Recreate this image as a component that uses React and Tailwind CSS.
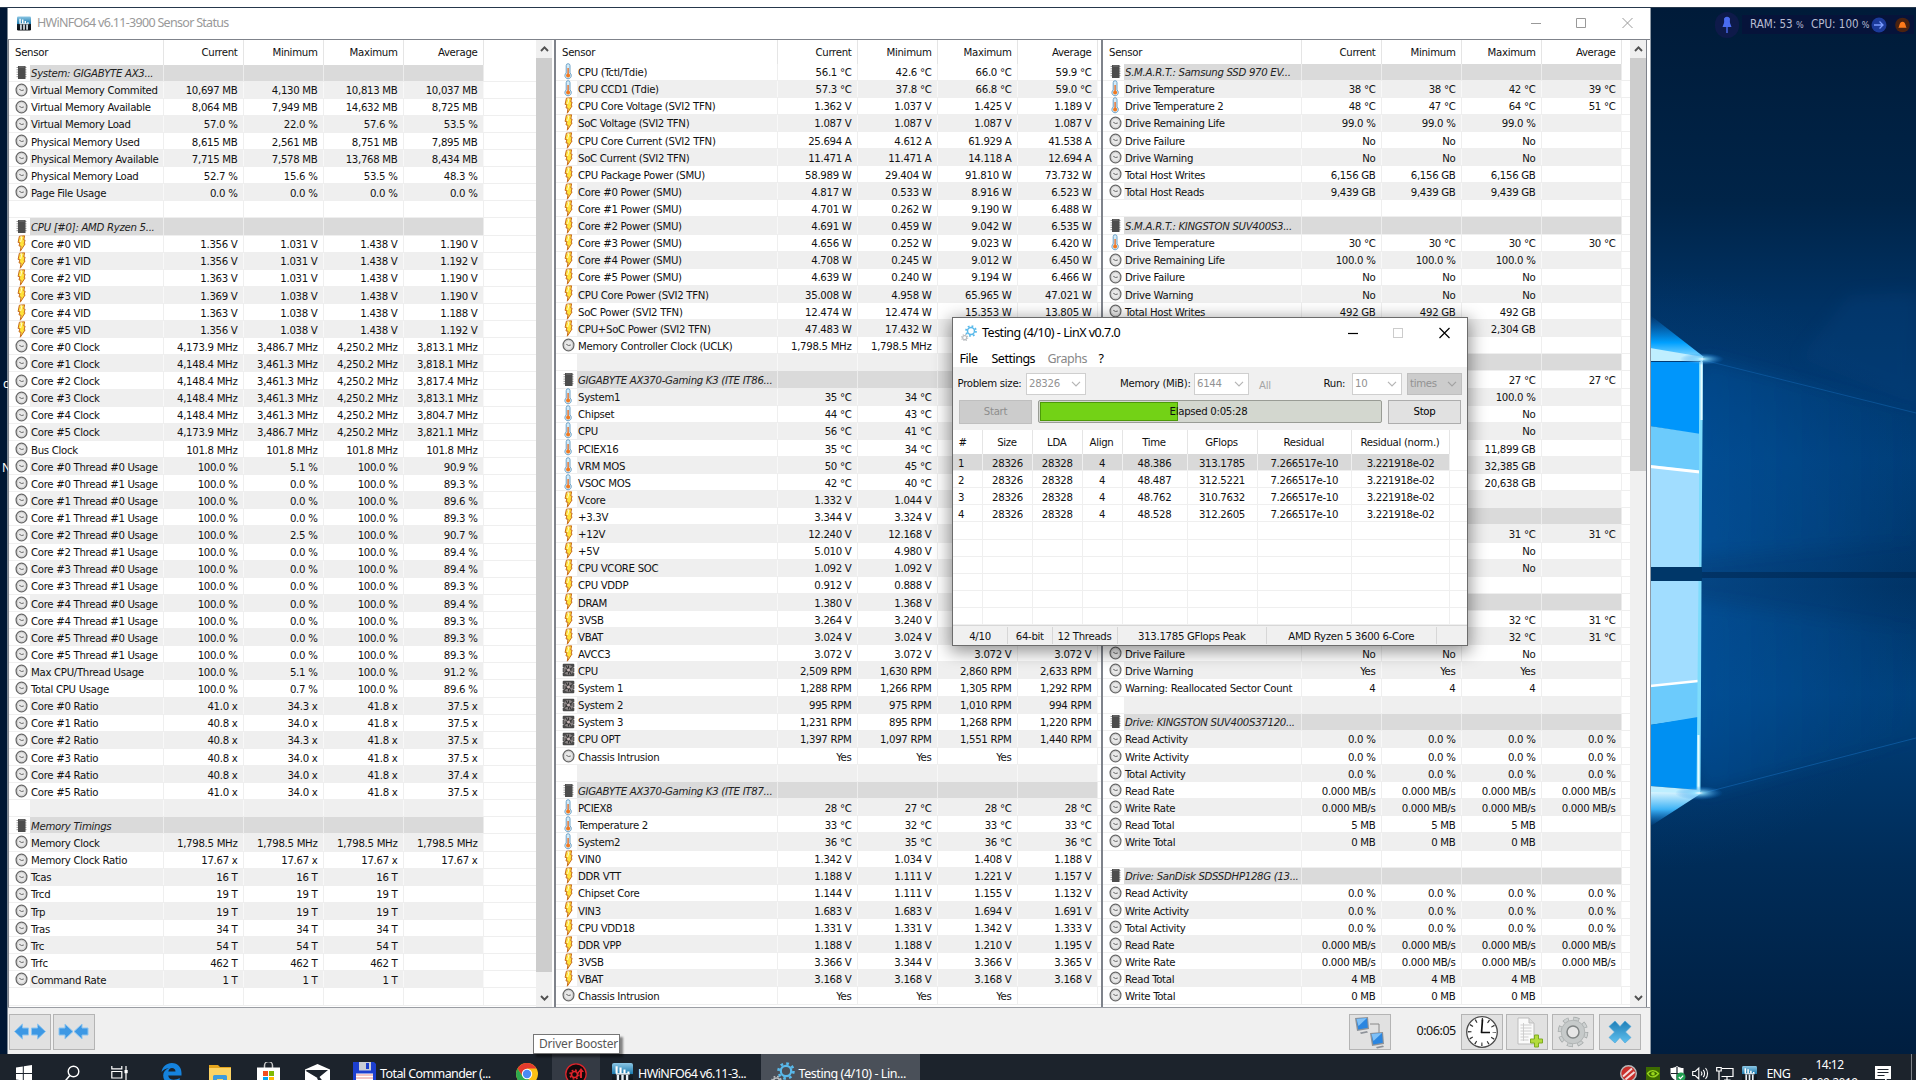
import React from "react";

/* ---------- sensor data: [icon, label, current, minimum, maximum, average] ---------- */
const usage = (name, min, avg) => ["c", name, "100.0 %", min, "100.0 %", avg];

const pane1 = [
  ["s", "System: GIGABYTE AX3..."],
  ["c", "Virtual Memory Commited", "10,697 MB", "4,130 MB", "10,813 MB", "10,037 MB"],
  ["c", "Virtual Memory Available", "8,064 MB", "7,949 MB", "14,632 MB", "8,725 MB"],
  ["c", "Virtual Memory Load", "57.0 %", "22.0 %", "57.6 %", "53.5 %"],
  ["c", "Physical Memory Used", "8,615 MB", "2,561 MB", "8,751 MB", "7,895 MB"],
  ["c", "Physical Memory Available", "7,715 MB", "7,578 MB", "13,768 MB", "8,434 MB"],
  ["c", "Physical Memory Load", "52.7 %", "15.6 %", "53.5 %", "48.3 %"],
  ["c", "Page File Usage", "0.0 %", "0.0 %", "0.0 %", "0.0 %"],
  [],
  ["s", "CPU [#0]: AMD Ryzen 5..."],
  ["v", "Core #0 VID", "1.356 V", "1.031 V", "1.438 V", "1.190 V"],
  ["v", "Core #1 VID", "1.356 V", "1.031 V", "1.438 V", "1.192 V"],
  ["v", "Core #2 VID", "1.363 V", "1.031 V", "1.438 V", "1.190 V"],
  ["v", "Core #3 VID", "1.369 V", "1.038 V", "1.438 V", "1.190 V"],
  ["v", "Core #4 VID", "1.363 V", "1.038 V", "1.438 V", "1.188 V"],
  ["v", "Core #5 VID", "1.356 V", "1.038 V", "1.438 V", "1.192 V"],
  ["c", "Core #0 Clock", "4,173.9 MHz", "3,486.7 MHz", "4,250.2 MHz", "3,813.1 MHz"],
  ["c", "Core #1 Clock", "4,148.4 MHz", "3,461.3 MHz", "4,250.2 MHz", "3,818.1 MHz"],
  ["c", "Core #2 Clock", "4,148.4 MHz", "3,461.3 MHz", "4,250.2 MHz", "3,817.4 MHz"],
  ["c", "Core #3 Clock", "4,148.4 MHz", "3,461.3 MHz", "4,250.2 MHz", "3,813.1 MHz"],
  ["c", "Core #4 Clock", "4,148.4 MHz", "3,461.3 MHz", "4,250.2 MHz", "3,804.7 MHz"],
  ["c", "Core #5 Clock", "4,173.9 MHz", "3,486.7 MHz", "4,250.2 MHz", "3,821.1 MHz"],
  ["c", "Bus Clock", "101.8 MHz", "101.8 MHz", "101.8 MHz", "101.8 MHz"],
  usage("Core #0 Thread #0 Usage", "5.1 %", "90.9 %"),
  usage("Core #0 Thread #1 Usage", "0.0 %", "89.3 %"),
  usage("Core #1 Thread #0 Usage", "0.0 %", "89.6 %"),
  usage("Core #1 Thread #1 Usage", "0.0 %", "89.3 %"),
  usage("Core #2 Thread #0 Usage", "2.5 %", "90.7 %"),
  usage("Core #2 Thread #1 Usage", "0.0 %", "89.4 %"),
  usage("Core #3 Thread #0 Usage", "0.0 %", "89.4 %"),
  usage("Core #3 Thread #1 Usage", "0.0 %", "89.3 %"),
  usage("Core #4 Thread #0 Usage", "0.0 %", "89.4 %"),
  usage("Core #4 Thread #1 Usage", "0.0 %", "89.3 %"),
  usage("Core #5 Thread #0 Usage", "0.0 %", "89.3 %"),
  usage("Core #5 Thread #1 Usage", "0.0 %", "89.3 %"),
  usage("Max CPU/Thread Usage", "5.1 %", "91.2 %"),
  usage("Total CPU Usage", "0.7 %", "89.6 %"),
  ["c", "Core #0 Ratio", "41.0 x", "34.3 x", "41.8 x", "37.5 x"],
  ["c", "Core #1 Ratio", "40.8 x", "34.0 x", "41.8 x", "37.5 x"],
  ["c", "Core #2 Ratio", "40.8 x", "34.3 x", "41.8 x", "37.5 x"],
  ["c", "Core #3 Ratio", "40.8 x", "34.0 x", "41.8 x", "37.5 x"],
  ["c", "Core #4 Ratio", "40.8 x", "34.0 x", "41.8 x", "37.4 x"],
  ["c", "Core #5 Ratio", "41.0 x", "34.0 x", "41.8 x", "37.5 x"],
  [],
  ["s", "Memory Timings"],
  ["c", "Memory Clock", "1,798.5 MHz", "1,798.5 MHz", "1,798.5 MHz", "1,798.5 MHz"],
  ["c", "Memory Clock Ratio", "17.67 x", "17.67 x", "17.67 x", "17.67 x"],
  ["c", "Tcas", "16 T", "16 T", "16 T", ""],
  ["c", "Trcd", "19 T", "19 T", "19 T", ""],
  ["c", "Trp", "19 T", "19 T", "19 T", ""],
  ["c", "Tras", "34 T", "34 T", "34 T", ""],
  ["c", "Trc", "54 T", "54 T", "54 T", ""],
  ["c", "Trfc", "462 T", "462 T", "462 T", ""],
  ["c", "Command Rate", "1 T", "1 T", "1 T", ""],
  [],
];

const pane2 = [
  ["t", "CPU (Tctl/Tdie)", "56.1 °C", "42.6 °C", "66.0 °C", "59.9 °C"],
  ["t", "CPU CCD1 (Tdie)", "57.3 °C", "37.8 °C", "66.8 °C", "59.0 °C"],
  ["v", "CPU Core Voltage (SVI2 TFN)", "1.362 V", "1.037 V", "1.425 V", "1.189 V"],
  ["v", "SoC Voltage (SVI2 TFN)", "1.087 V", "1.087 V", "1.087 V", "1.087 V"],
  ["v", "CPU Core Current (SVI2 TFN)", "25.694 A", "4.612 A", "61.929 A", "41.538 A"],
  ["v", "SoC Current (SVI2 TFN)", "11.471 A", "11.471 A", "14.118 A", "12.694 A"],
  ["v", "CPU Package Power (SMU)", "58.989 W", "29.404 W", "91.810 W", "73.732 W"],
  ["v", "Core #0 Power (SMU)", "4.817 W", "0.533 W", "8.916 W", "6.523 W"],
  ["v", "Core #1 Power (SMU)", "4.701 W", "0.262 W", "9.190 W", "6.488 W"],
  ["v", "Core #2 Power (SMU)", "4.691 W", "0.459 W", "9.042 W", "6.535 W"],
  ["v", "Core #3 Power (SMU)", "4.656 W", "0.252 W", "9.023 W", "6.420 W"],
  ["v", "Core #4 Power (SMU)", "4.708 W", "0.245 W", "9.012 W", "6.450 W"],
  ["v", "Core #5 Power (SMU)", "4.639 W", "0.240 W", "9.194 W", "6.466 W"],
  ["v", "CPU Core Power (SVI2 TFN)", "35.008 W", "4.958 W", "65.965 W", "47.021 W"],
  ["v", "SoC Power (SVI2 TFN)", "12.474 W", "12.474 W", "15.353 W", "13.805 W"],
  ["v", "CPU+SoC Power (SVI2 TFN)", "47.483 W", "17.432 W"],
  ["c", "Memory Controller Clock (UCLK)", "1,798.5 MHz", "1,798.5 MHz"],
  [],
  ["s", "GIGABYTE AX370-Gaming K3 (ITE IT86..."],
  ["t", "System1", "35 °C", "34 °C"],
  ["t", "Chipset", "44 °C", "43 °C"],
  ["t", "CPU", "56 °C", "41 °C"],
  ["t", "PCIEX16", "35 °C", "34 °C"],
  ["t", "VRM MOS", "50 °C", "45 °C"],
  ["t", "VSOC MOS", "42 °C", "40 °C"],
  ["v", "Vcore", "1.332 V", "1.044 V"],
  ["v", "+3.3V", "3.344 V", "3.324 V"],
  ["v", "+12V", "12.240 V", "12.168 V"],
  ["v", "+5V", "5.010 V", "4.980 V"],
  ["v", "CPU VCORE SOC", "1.092 V", "1.092 V"],
  ["v", "CPU VDDP", "0.912 V", "0.888 V"],
  ["v", "DRAM", "1.380 V", "1.368 V"],
  ["v", "3VSB", "3.264 V", "3.240 V"],
  ["v", "VBAT", "3.024 V", "3.024 V"],
  ["v", "AVCC3", "3.072 V", "3.072 V", "3.072 V", "3.072 V"],
  ["f", "CPU", "2,509 RPM", "1,630 RPM", "2,860 RPM", "2,633 RPM"],
  ["f", "System 1", "1,288 RPM", "1,266 RPM", "1,305 RPM", "1,292 RPM"],
  ["f", "System 2", "995 RPM", "975 RPM", "1,010 RPM", "994 RPM"],
  ["f", "System 3", "1,231 RPM", "895 RPM", "1,268 RPM", "1,220 RPM"],
  ["f", "CPU OPT", "1,397 RPM", "1,097 RPM", "1,551 RPM", "1,440 RPM"],
  ["c", "Chassis Intrusion", "Yes", "Yes", "Yes", ""],
  [],
  ["s", "GIGABYTE AX370-Gaming K3 (ITE IT87..."],
  ["t", "PCIEX8", "28 °C", "27 °C", "28 °C", "28 °C"],
  ["t", "Temperature 2", "33 °C", "32 °C", "33 °C", "33 °C"],
  ["t", "System2", "36 °C", "35 °C", "36 °C", "36 °C"],
  ["v", "VIN0", "1.342 V", "1.034 V", "1.408 V", "1.188 V"],
  ["v", "DDR VTT", "1.188 V", "1.111 V", "1.221 V", "1.157 V"],
  ["v", "Chipset Core", "1.144 V", "1.111 V", "1.155 V", "1.132 V"],
  ["v", "VIN3", "1.683 V", "1.683 V", "1.694 V", "1.691 V"],
  ["v", "CPU VDD18", "1.331 V", "1.331 V", "1.342 V", "1.333 V"],
  ["v", "DDR VPP", "1.188 V", "1.188 V", "1.210 V", "1.195 V"],
  ["v", "3VSB", "3.366 V", "3.344 V", "3.366 V", "3.365 V"],
  ["v", "VBAT", "3.168 V", "3.168 V", "3.168 V", "3.168 V"],
  ["c", "Chassis Intrusion", "Yes", "Yes", "Yes", ""],
];

const activity = (read, readTotal) => [
  ["c", "Read Activity", "0.0 %", "0.0 %", "0.0 %", "0.0 %"],
  ["c", "Write Activity", "0.0 %", "0.0 %", "0.0 %", "0.0 %"],
  ["c", "Total Activity", "0.0 %", "0.0 %", "0.0 %", "0.0 %"],
  ["c", "Read Rate", read, read, read, read],
  ["c", "Write Rate", read, read, read, read],
  ["c", "Read Total", readTotal, readTotal, readTotal, ""],
  ["c", "Write Total", "0 MB", "0 MB", "0 MB", ""],
];

const pane3 = [
  ["s", "S.M.A.R.T.: Samsung SSD 970 EV..."],
  ["t", "Drive Temperature", "38 °C", "38 °C", "42 °C", "39 °C"],
  ["t", "Drive Temperature 2", "48 °C", "47 °C", "64 °C", "51 °C"],
  ["c", "Drive Remaining Life", "99.0 %", "99.0 %", "99.0 %", ""],
  ["c", "Drive Failure", "No", "No", "No", ""],
  ["c", "Drive Warning", "No", "No", "No", ""],
  ["c", "Total Host Writes", "6,156 GB", "6,156 GB", "6,156 GB", ""],
  ["c", "Total Host Reads", "9,439 GB", "9,439 GB", "9,439 GB", ""],
  [],
  ["s", "S.M.A.R.T.: KINGSTON SUV400S3..."],
  ["t", "Drive Temperature", "30 °C", "30 °C", "30 °C", "30 °C"],
  ["c", "Drive Remaining Life", "100.0 %", "100.0 %", "100.0 %", ""],
  ["c", "Drive Failure", "No", "No", "No", ""],
  ["c", "Drive Warning", "No", "No", "No", ""],
  ["c", "Total Host Writes", "492 GB", "492 GB", "492 GB", ""],
  ["c", "", "", "", "2,304 GB", ""],
  [],
  ["s", ""],
  ["t", "", "", "", "27 °C", "27 °C"],
  ["c", "", "", "", "100.0 %", ""],
  ["c", "", "", "", "No", ""],
  ["c", "", "", "", "No", ""],
  ["c", "", "", "", "11,899 GB", ""],
  ["c", "", "", "", "32,385 GB", ""],
  ["c", "", "", "", "20,638 GB", ""],
  [],
  ["s", ""],
  ["t", "", "", "", "31 °C", "31 °C"],
  ["c", "", "", "", "No", ""],
  ["c", "", "", "", "No", ""],
  [],
  ["s", ""],
  ["t", "", "", "", "32 °C", "31 °C"],
  ["t", "", "", "", "32 °C", "31 °C"],
  ["c", "Drive Failure", "No", "No", "No", ""],
  ["c", "Drive Warning", "Yes", "Yes", "Yes", ""],
  ["c", "Warning: Reallocated Sector Count", "4", "4", "4", ""],
  [],
  ["s", "Drive: KINGSTON SUV400S37120..."],
  ...activity("0.000 MB/s", "5 MB"),
  [],
  ["s", "Drive: SanDisk SDSSDHP128G (13..."],
  ...activity("0.000 MB/s", "4 MB"),
];

/* ---------- row icons ---------- */
function RowIcon({ kind }) {
  if (kind === "c")
    return (
      <svg className="block h-[14px] w-[13px]" viewBox="0 0 13 14">
        <ellipse cx="6.5" cy="7" rx="5.4" ry="5.9" fill="#e9e9e9" stroke="#6a6a6a" strokeWidth="1.3" />
        <ellipse cx="6.5" cy="7" rx="4.2" ry="4.6" fill="none" stroke="#c4c4c4" strokeWidth=".8" />
        <path d="M4.300 6.300 6.600 7.500 8.800 7" fill="none" stroke="#666" strokeWidth="1" />
      </svg>
    );
  if (kind === "v")
    return (
      <svg className="block h-[17px] w-[13px]" viewBox="0 0 13 17">
        <path d="M4.4 1.2 9.6.8 8.8 5l1.3.2-1 3.4 1 .3-4.8 7.3L6 11.2l-2-.3.9-3.2-1.8-.3Z" fill="#ffe23a" stroke="#c76a1e" strokeWidth="1" />
        <path d="M5.2 2 7 1.8 5.6 7" stroke="#fffbd0" strokeWidth="1" fill="none" />
      </svg>
    );
  if (kind === "t")
    return (
      <svg className="block h-[17px] w-[13px]" viewBox="0 0 13 17">
        <path d="M4.2 2.6a1.9 1.9 0 0 1 3.8 0V10a3.2 3.2 0 1 1-3.8 0Z" fill="#d4ebf8" stroke="#6fa3c8" strokeWidth="1" />
        <path d="M6.1 5v7" stroke="#e8702a" strokeWidth="1.4" />
        <circle cx="6.1" cy="12.4" r="2" fill="#f07a22" />
      </svg>
    );
  if (kind === "f")
    return (
      <svg className="block h-[14px] w-[13px]" viewBox="0 0 13 14">
        <rect x=".7" y=".7" width="11.6" height="12.6" rx="1" fill="#4a4a4a" />
        <circle cx="6.5" cy="7" r="4.9" fill="#8b8585" />
        <path d="M6.5 7 4 3M6.5 7l4-2.5M6.5 7 9 11M6.5 7l-4 2.5M6.5 7V2.5M6.5 7h-4M6.5 7h4M6.5 7v4.500" stroke="#343434" strokeWidth="1.1" />
        <circle cx="6.5" cy="7" r="1.5" fill="#c9b9b9" />
        <path d="M0 4.500h1.500M0 9.500h1.500M11.500 4.500H13M11.500 9.500H13" stroke="#fff" strokeWidth=".8" />
      </svg>
    );
  if (kind === "s")
    return (
      <svg className="block h-[15px] w-[13px]" viewBox="0 0 13 15">
        <path d="M1.500 2.500h10M1.500 4.800h10M1.500 7.100h10M1.500 9.400h10M1.500 11.700h10" stroke="#9a9a9a" strokeWidth="1" />
        <rect x="3" y="1" width="7.500" height="13" fill="#4d4d4d" />
        <path d="M4 2h5.500" stroke="#777" />
      </svg>
    );
  return null;
}

function Row({ row, index, nameW, lastW }) {
  const section = row[0] === "s";
  const gray = index % 2 === 1;
  const bg = section ? "bg-[#dadada]" : gray ? "bg-[#efefef]" : "bg-white";
  const line = section ? "border-[#ececec]" : gray ? "border-[#f8f8f8]" : "border-[#efefef]";
  return (
    <div className="flex h-[17.118px] w-full shrink-0 items-stretch border-b border-[#efefef]">
      <div className={"flex shrink-0 " + nameW}>
        <div className="flex w-[21px] shrink-0 items-center justify-center bg-white pl-[4px]">
          <RowIcon kind={row[0]} />
        </div>
        <div className={"flex min-w-0 flex-1 items-center border-r pt-[2.500px] pl-[1px] whitespace-nowrap " + bg + " " + line + (section ? " text-[#222] italic" : "")}>
          {row[1]}
        </div>
      </div>
      {[2, 3, 4, 5].map((i) => (
        <div key={i} className={"flex w-[80px] shrink-0 items-center justify-end border-r pt-[2.500px] pr-[5.500px] whitespace-pre " + bg + " " + line}>
          {row[i]}
        </div>
      ))}
      <div className={"bg-white " + lastW} />
    </div>
  );
}

function ScrollArrow({ down }) {
  return (
    <svg className="block h-[6px] w-[9px]" viewBox="0 0 9 6">
      <path d={down ? "M1 1 4.500 4.600 8 1" : "M1 5 4.500 1.400 8 5"} fill="none" stroke="#505050" strokeWidth="1.9" />
    </svg>
  );
}

function Scrollbar({ thumb }) {
  return (
    <div className="flex w-[16px] shrink-0 flex-col items-center bg-[#f0f0f0]">
      <div className="flex h-[18px] w-full shrink-0 items-center justify-center">
        <ScrollArrow />
      </div>
      <div className={"w-full shrink-0 bg-[#cdcdcd] " + thumb} />
      <div className="flex-1" />
      <div className="flex h-[18px] w-full shrink-0 items-center justify-center">
        <ScrollArrow down />
      </div>
    </div>
  );
}

function Pane({ rows, nameW, lastW, width, headH, thumb, border }) {
  return (
    <div className={"flex shrink-0 overflow-hidden border-[#7f838b] bg-white " + width + " " + border}>
      <div className="flex min-w-0 flex-1 flex-col overflow-hidden">
        <div className={"flex shrink-0 items-stretch " + headH}>
          <div className={"flex shrink-0 items-center border-r border-[#e5e5e5] pt-[1.500px] pl-[6px] " + nameW}>Sensor</div>
          {["Current", "Minimum", "Maximum", "Average"].map((h) => (
            <div key={h} className="flex w-[80px] shrink-0 items-center justify-end border-r border-[#e5e5e5] pt-[1.500px] pr-[5.500px]">
              {h}
            </div>
          ))}
        </div>
        {rows.map((r, i) => (
          <Row key={i} row={r} index={i} nameW={nameW} lastW={lastW} />
        ))}
      </div>
      {thumb && <Scrollbar thumb={thumb} />}
    </div>
  );
}

/* ---------- shared pictograms ---------- */
function HwLogo({ className }) {
  return (
    <svg className={className} viewBox="0 0 16 16">
      <defs>
        <linearGradient id="hw" x1="0" y1="0" x2="0" y2="1">
          <stop offset="0" stopColor="#8cc6e4" />
          <stop offset=".5" stopColor="#1f7db0" />
          <stop offset=".55" stopColor="#15202a" />
          <stop offset="1" stopColor="#0b0f14" />
        </linearGradient>
      </defs>
      <rect width="16" height="16" rx="1.500" fill="url(#hw)" />
      <path d="M3.500 2.500v5.500M6.500 3.500v4.500M9.500 5v3M12.500 6.500V8" stroke="#fff" strokeWidth="1.600" />
      <path d="M4.500 9v6M8 9v6M11.500 9v6" stroke="#e8f0f5" strokeWidth="1.800" />
      <path d="M3 8.300h10.500" stroke="#fff" strokeWidth="1" />
    </svg>
  );
}

function Gears({ className }) {
  return (
    <svg className={className} viewBox="0 0 24 24">
      <circle cx="15" cy="9" r="5.200" fill="none" stroke="#59b9ea" strokeWidth="2.200" />
      <circle cx="15" cy="9" r="7.500" fill="none" stroke="#59b9ea" strokeWidth="2.600" strokeDasharray="2.700 3.190" />
      <circle cx="5.500" cy="19" r="3" fill="none" stroke="#b9bdc0" strokeWidth="1.700" />
      <circle cx="5.500" cy="19" r="4.600" fill="none" stroke="#b9bdc0" strokeWidth="1.600" strokeDasharray="1.800 1.810" />
    </svg>
  );
}

function ToolButton({ children, className }) {
  return (
    <div className={"flex h-[36px] shrink-0 items-center justify-center border border-[#b4b4b4] bg-[#e1e1e1] " + className}>
      {children}
    </div>
  );
}

const ARROW_R = "M0 4h6V0l8 7.500-8 7.500v-4H0Z";

function SensorWindow() {
  return (
    <div className="absolute top-[8px] left-[8px] flex h-[1046px] w-[1643px] flex-col overflow-hidden border-r border-[#8d99a5] bg-[#f0f0f0]">
      <div className="flex h-[30.500px] shrink-0 items-center bg-white">
        <HwLogo className="ml-[9px] h-[15px] w-[14px]" />
        <span className="ml-[6px] text-[12.500px] tracking-[-0.7px] whitespace-nowrap text-[#999]">HWiNFO64 v6.11-3900 Sensor Status</span>
        <svg className="mr-[17.500px] ml-auto block h-[12px] w-[102px]" viewBox="0 0 102 12">
          <path d="M0 6.500h10M45.500 1.500h9v9h-9ZM91.500 1l10 10M101.500 1l-10 10" fill="none" stroke="#999" strokeWidth="1" />
        </svg>
      </div>
      <div className="flex h-[969px] shrink-0 border-t border-b border-[#7f838b] border-b-[#9b9ea4] bg-white font-['DejaVu_Sans_Condensed','DejaVu_Sans',sans-serif] text-[11.300px] leading-none font-stretch-condensed tracking-[-0.3px] text-[#111]">
        <Pane rows={pane1} width="w-[546px]" nameW="w-[155px]" lastW="flex-1" headH="h-[25px]" thumb="h-[914px]" border="border-l pr-[2px]" />
        <Pane rows={pane2} width="w-[547px]" nameW="w-[222px]" lastW="flex-1" headH="h-[24px]" border="border-l-2" />
        <Pane rows={pane3} width="w-[546px]" nameW="w-[199px]" lastW="flex-1" headH="h-[24px]" thumb="h-[413px]" border="border-l-2 border-r" />
      </div>
      <div className="flex flex-1 items-start pt-[6px]">
        <ToolButton className="ml-px w-[42px]">
          <svg className="block h-[17px] w-[34px]" viewBox="0 0 34 17">
            <path d={ARROW_R} transform="translate(15.500 1) matrix(-1 0 0 1 0 0)" fill="#3d98e4" stroke="#8cc4ef" />
            <path d={ARROW_R} transform="translate(18.500 1)" fill="#3d98e4" stroke="#8cc4ef" />
          </svg>
        </ToolButton>
        <ToolButton className="ml-[2px] w-[42px]">
          <svg className="block h-[17px] w-[32px]" viewBox="0 0 32 17">
            <path d={ARROW_R} transform="translate(1 1)" fill="#3d98e4" stroke="#8cc4ef" />
            <path d={ARROW_R} transform="translate(30 1) matrix(-1 0 0 1 0 0)" fill="#3d98e4" stroke="#8cc4ef" />
          </svg>
        </ToolButton>
        <div className="flex-1" />
        <ToolButton className="w-[42px]">
          <svg className="block h-[34px] w-[34px]" viewBox="0 0 34 34">
            <path d="M17 9h9v9" fill="none" stroke="#888" />
            <path d="m2 3 13-1 1 12-12 2Z" fill="#8d9299" />
            <path d="m3.500 4 10.500-1 .8 9.800-9.600 1.700Z" fill="#2b86e0" />
            <path d="m3.500 4 10.500-1-8.500 8Z" fill="#7fc0f6" />
            <path d="M7 17.500 14 16l1 1.500-7 1.500Z" fill="#8d9299" />
            <path d="m17 18 13-1 1 12-12 2Z" fill="#8d9299" />
            <path d="m18.500 19 10.500-1 .8 9.800-9.600 1.700Z" fill="#2b86e0" />
            <path d="m18.500 19 10.500-1-8.500 8Z" fill="#7fc0f6" />
            <path d="m23 32 7-1.500 1 1.500-7 1.500Z" fill="#8d9299" />
          </svg>
        </ToolButton>
        <span className="mt-[9.500px] ml-[25.500px] w-[44px] text-[12.500px] leading-[15px] tracking-[-0.45px] whitespace-nowrap text-[#111]">0:06:05</span>
        <ToolButton className="w-[42px]">
          <svg className="block h-[34px] w-[34px]" viewBox="0 0 34 34">
            <circle cx="17" cy="17" r="15.300" fill="#fff" stroke="#4a4a4a" strokeWidth="1.300" />
            <circle cx="17" cy="17" r="12.300" fill="none" stroke="#333" strokeWidth="3.600" strokeDasharray="1.200 5.240" strokeDashoffset=".6" />
            <path d="M17.500 4.500 16.500 18M16 17.500h9" fill="none" stroke="#111" strokeWidth="1.700" />
          </svg>
        </ToolButton>
        <ToolButton className="ml-[3px] w-[42px]">
          <svg className="block h-[34px] w-[34px]" viewBox="0 0 34 34">
            <path d="M8 3h11l5 5v21H8Z" fill="#fafafa" stroke="#bdbdbd" />
            <path d="M19 3v5h5" fill="#ddd" stroke="#bdbdbd" />
            <path d="M10.500 10h11M10.500 13h11M10.500 16h11M10.500 19h11M10.500 22h8M10.500 25h8M13.500 8v18" stroke="#c9c9c9" strokeWidth=".9" fill="none" />
            <path d="M24.500 20h4v4h4v4h-4v4h-4v-4h-4v-4h4Z" fill="#b4dc3c" stroke="#7fab22" />
          </svg>
        </ToolButton>
        <ToolButton className="ml-[4px] w-[42px]">
          <svg className="block h-[34px] w-[34px]" viewBox="0 0 34 34">
            <circle cx="17" cy="17" r="13.300" fill="none" stroke="#a0a5a5" strokeWidth="4" strokeDasharray="5.800 4.645" />
            <circle cx="17" cy="17" r="13.300" fill="none" stroke="#cdd1d1" strokeWidth="2.600" strokeDasharray="4.600 5.845" strokeDashoffset="-.6" />
            <circle cx="17" cy="17" r="9" fill="none" stroke="#c6caca" strokeWidth="6" />
            <circle cx="17" cy="17" r="11.800" fill="none" stroke="#a9aeae" strokeWidth=".7" />
            <circle cx="17" cy="17" r="6" fill="#e6e6e6" stroke="#808585" strokeWidth="1.500" />
          </svg>
        </ToolButton>
        <ToolButton className="mr-[9.500px] ml-[5px] w-[42px]">
          <svg className="block h-[28px] w-[28px]" viewBox="0 0 28 28">
            <defs>
              <linearGradient id="xg" x1="0" y1="0" x2="0" y2="1">
                <stop offset="0" stopColor="#1f7fb8" />
                <stop offset="1" stopColor="#5fc0ee" />
              </linearGradient>
            </defs>
            <path d="m9 3 5 5.500L19 3l6 5.500-5.500 5.500 5.500 5.500-6 5.500-5-5.500L9 25l-6-5.500L8.500 14 3 8.500Z" fill="url(#xg)" stroke="#4aa5d8" strokeWidth=".6" />
          </svg>
        </ToolButton>
      </div>
    </div>
  );
}

/* ---------- LinX ---------- */
const linxCols = [
  ["#", "w-[30px]"],
  ["Size", "w-[50px]"],
  ["LDA", "w-[49.500px]"],
  ["Align", "w-[40px]"],
  ["Time", "w-[65px]"],
  ["GFlops", "w-[70px]"],
  ["Residual", "w-[94.500px]"],
  ["Residual (norm.)", "w-[98px]"],
];
const linxRows = [
  ["1", "28326", "28328", "4", "48.386", "313.1785", "7.266517e-10", "3.221918e-02"],
  ["2", "28326", "28328", "4", "48.487", "312.5221", "7.266517e-10", "3.221918e-02"],
  ["3", "28326", "28328", "4", "48.762", "310.7632", "7.266517e-10", "3.221918e-02"],
  ["4", "28326", "28328", "4", "48.528", "312.2605", "7.266517e-10", "3.221918e-02"],
  [], [], [], [], [], [],
];

function Combo({ value, className, dark }) {
  return (
    <div className={"flex h-[22px] shrink-0 items-center justify-between border pr-[4px] pl-[2px] text-[#929292] " + className + (dark ? " border-[#bfbfbf] bg-[#cccccc]" : " border-[#cfcfcf] bg-white")}>
      {value}
      <svg className="block h-[6px] w-[10px]" viewBox="0 0 10 6">
        <path d="m1 .8 4 4 4-4" fill="none" stroke={dark ? "#a2a2a2" : "#b5b5b5"} strokeWidth="1.200" />
      </svg>
    </div>
  );
}

function LinxWindow() {
  return (
    <div className="absolute top-[317px] left-[952px] flex h-[329px] w-[516px] flex-col overflow-hidden border border-[#6c6c6c] bg-white font-['DejaVu_Sans_Condensed','DejaVu_Sans',sans-serif] text-[11.300px] leading-none font-stretch-condensed tracking-[-0.3px] text-[#111] shadow-[0_4px_16px_2px_rgba(0,0,0,0.42)]">
      <div className="flex h-[30px] shrink-0 items-center font-['Noto_Sans',sans-serif]">
        <Gears className="ml-[8px] h-[16px] w-[16px]" />
        <span className="ml-[5px] text-[12.500px] tracking-[-0.5px] whitespace-nowrap text-black">Testing (4/10) - LinX v0.7.0</span>
        <svg className="mr-[17px] ml-auto block h-[12px] w-[102px]" viewBox="0 0 102 12">
          <path d="M0 6.500h10" stroke="#000" strokeWidth="1.200" />
          <rect x="45.500" y="1.500" width="9" height="9" fill="none" stroke="#ccc" />
          <path d="m91.500 1 10 10M101.500 1l-10 10" fill="none" stroke="#000" strokeWidth="1.200" />
        </svg>
      </div>
      <div className="flex h-[19px] shrink-0 items-center pl-[6.500px] font-['Noto_Sans',sans-serif] text-[12.500px] tracking-[-0.5px] whitespace-nowrap text-black">
        <span className="w-[32px] pt-[3px]">File</span>
        <span className="w-[56px] pt-[3px]">Settings</span>
        <span className="w-[51px] pt-[3px] text-[#888]">Graphs</span>
        <span className="pt-[3px]">?</span>
      </div>
      <div className="flex h-[63px] shrink-0 flex-col bg-[#f0f0f0]">
        <div className="mt-[6px] flex h-[22px] items-center whitespace-nowrap">
          <span className="ml-[4.500px] w-[68.500px]">Problem size:</span>
          <Combo value="28326" className="w-[60px]" />
          <span className="ml-[34px] w-[74px]">Memory (MiB):</span>
          <Combo value="6144" className="w-[55px]" />
          <span className="mt-[3px] ml-[10px] w-[64.500px] text-[#a5a5a5]">All</span>
          <span className="w-[28.500px]">Run:</span>
          <Combo value="10" className="w-[50px]" />
          <Combo value="times" dark className="ml-[5px] w-[55px]" />
        </div>
        <div className="mt-[4.500px] flex h-[24px] items-center">
          <div className="ml-[6px] flex h-[24px] w-[73px] items-center justify-center border border-[#bfbfbf] bg-[#cccccc] pt-px text-[#8e8e8e]">Start</div>
          <div className="relative ml-[6px] flex h-[23px] w-[344px] items-center rounded-[2px] border border-[#999c95] bg-[#d3d7cf] p-[1px]">
            <div className="h-full w-[138px] border border-[#4c9a08] bg-[#73d216]" />
            <span className="absolute inset-x-0 pt-px pr-[3px] text-center">Elapsed 0:05:28</span>
          </div>
          <div className="ml-[6px] flex h-[24px] w-[73px] items-center justify-center border border-[#adadad] bg-[#e1e1e1] pt-px text-black">Stop</div>
        </div>
      </div>
      <div className="flex h-[195px] shrink-0 flex-col overflow-hidden bg-white">
        <div className="flex h-[24px] shrink-0">
          {linxCols.map(([n, w], i) => (
            <div key={n} className={"flex shrink-0 items-center border-r border-[#e5e5e5] pt-[1.500px] whitespace-nowrap " + w + (i ? " justify-center pr-px" : " pl-[5.500px]")}>
              {n}
            </div>
          ))}
        </div>
        {linxRows.map((r, ri) => (
          <div key={ri} className="flex h-[17.118px] shrink-0 border-b border-[#efefef]">
            {linxCols.map(([n, w], i) => (
              <div key={n} className={"flex shrink-0 items-center border-r border-[#efefef] pt-[2.500px] whitespace-nowrap " + w + (i ? " justify-center" : " pl-[5px]") + (ri === 0 ? " bg-[#d9d9d9]" : "")}>
                {r[i]}
              </div>
            ))}
          </div>
        ))}
      </div>
      <div className="flex flex-1 items-stretch border-t border-[#d7d7d7] bg-[#f0f0f0] text-center whitespace-nowrap">
        {[
          ["4/10", "w-[55px]"],
          ["64-bit", "w-[44.500px]"],
          ["12 Threads", "w-[65px]"],
          ["313.1785 GFlops Peak", "w-[149.500px]"],
          ["AMD Ryzen 5 3600 6-Core", "w-[169.500px]"],
        ].map(([t, w]) => (
          <div key={t} className={"my-px flex shrink-0 items-center justify-center border-r border-[#d7d7d7] pt-[1.500px] " + w}>
            {t}
          </div>
        ))}
      </div>
    </div>
  );
}

/* ---------- desktop background ---------- */
function Wallpaper() {
  return (
    <svg className="absolute top-[8px] left-0 block h-[1072px] w-[1916px]" viewBox="0 8 1916 1072" preserveAspectRatio="none">
      <defs>
        <linearGradient id="sky" x1="0" y1="0" x2="0" y2="1">
          <stop offset="0" stopColor="#001b39" />
          <stop offset=".18" stopColor="#002448" />
          <stop offset=".28" stopColor="#003264" />
          <stop offset=".42" stopColor="#003c76" />
          <stop offset=".54" stopColor="#003263" />
          <stop offset=".64" stopColor="#003f7a" />
          <stop offset=".8" stopColor="#002c58" />
          <stop offset="1" stopColor="#001c3c" />
        </linearGradient>
        <radialGradient id="glow" cx="1650" cy="570" r="300" gradientUnits="userSpaceOnUse">
          <stop offset="0" stopColor="#0a5aa6" stopOpacity=".6" />
          <stop offset=".6" stopColor="#065098" stopOpacity=".3" />
          <stop offset="1" stopColor="#044080" stopOpacity="0" />
        </radialGradient>
        <radialGradient id="flare">
          <stop offset="0" stopColor="#fff" />
          <stop offset=".2" stopColor="#8ee0ff" stopOpacity=".8" />
          <stop offset="1" stopColor="#0a7ae0" stopOpacity="0" />
        </radialGradient>
        <linearGradient id="topBeam" x1="0" y1="0" x2="0" y2="1">
          <stop offset="0" stopColor="#0a7de0" stopOpacity="0" />
          <stop offset=".6" stopColor="#00a0ff" />
          <stop offset="1" stopColor="#a8e6ff" />
        </linearGradient>
        <linearGradient id="botBeam" x1="0" y1="0" x2="0" y2="1">
          <stop offset="0" stopColor="#d8f4ff" />
          <stop offset=".5" stopColor="#3fb4f6" />
          <stop offset="1" stopColor="#0a7de0" stopOpacity="0" />
        </linearGradient>
        <linearGradient id="rayA" x1="0" y1="0" x2="1" y2="0">
          <stop offset="0" stopColor="#0a5cae" stopOpacity=".45" />
          <stop offset="1" stopColor="#0a4c90" stopOpacity=".1" />
        </linearGradient>
        <filter id="soft" x="-20%" y="-20%" width="140%" height="140%">
          <feGaussianBlur stdDeviation="8" />
        </filter>
      </defs>
      <rect x="0" y="8" width="1916" height="1072" fill="url(#sky)" />
      <rect x="0" y="8" width="10" height="1072" fill="#001734" />
      <rect x="1650" y="200" width="266" height="720" fill="url(#glow)" />
      <path d="M1703 358 1916 412V540L1650 560Z" fill="url(#rayA)" filter="url(#soft)" />
      <path d="M1703 793 1916 738V630L1650 595Z" fill="url(#rayA)" filter="url(#soft)" />
      <path d="M1800 358 1850 295 1916 292V405Z" fill="#0a4a8a" opacity=".2" filter="url(#soft)" />
      <path d="M1703 360 1916 413" stroke="#1468b4" opacity=".5" />
      <path d="M1703 793 1916 738" stroke="#1468b4" opacity=".6" />
      <path d="M1651 575H1916" stroke="#00264f" strokeWidth="6" opacity=".55" />
      <path d="M1650 315 1704 357 1650 361Z" fill="url(#topBeam)" />
      <path d="M1650 348 1703 357v4l-53 0Z" fill="#bfeeff" />
      <path d="M1650 362h51v73l-51-9Z" fill="#0096fb" />
      <path d="m1650 426 51 8v38l-51-6Z" fill="#6ccbfc" />
      <path d="m1650 465 51 6v96h-51Z" fill="#a1ddff" />
      <path d="m1650 466.500 50 5.500" stroke="#fff" strokeWidth="3" />
      <path d="M1650 567h52v14h-52Z" fill="#003769" />
      <path d="M1650 581h50v100l-50 5Z" fill="#a1ddff" />
      <path d="m1650 686 48-5v37l-48 7Z" fill="#6ccbfc" />
      <path d="m1650 725 48-8v73l-48-4Z" fill="#0090f2" />
      <path d="m1650 686 48-5" stroke="#fff" strokeWidth="2.500" />
      <path d="M1699 362h4l-1.500 205H1699ZM1698.500 581h3l-1 210h-4Z" fill="#7edcfb" />
      <path d="M1701.500 360v60M1698.500 735v56" stroke="#e8fbff" strokeWidth="2" />
      <path d="m1650 786 50 4v4l-50 6Z" fill="#bdeeff" />
      <path d="m1650 792 51 1.500-51 33Z" fill="url(#botBeam)" />
      <ellipse cx="1702" cy="359" rx="22" ry="6" fill="url(#flare)" />
      <ellipse cx="1699" cy="793" rx="24" ry="7" fill="url(#flare)" />
      <path d="M7.500 8v1046" stroke="#7c8894" strokeWidth="1" />
    </svg>
  );
}

function Meter() {
  return (
    <div className="absolute top-[11px] right-[6px] flex h-[27px] items-center font-['DejaVu_Sans_Condensed',sans-serif] text-[11.500px] font-stretch-condensed whitespace-pre text-[#b9bdd2]">
      <div className="flex h-[26px] w-[24px] items-center justify-center rounded-full bg-[#0e1a4a]">
        <svg className="block h-[18px] w-[10px]" viewBox="0 0 10 18">
          <path d="M2.500 2h5l.5 5 1.500 4H.5L2 7Z" fill="#4a6cf0" />
          <path d="M5 11v6" stroke="#4a6cf0" strokeWidth="1.400" />
          <circle cx="5" cy="3.500" r="2.800" fill="#4a6cf0" />
        </svg>
      </div>
      <div className="ml-[3px] flex h-[19px] w-[172px] items-center bg-[#06133a] pl-[8px]">
        <span className="w-[61px] pt-px">RAM: 53 <span className="text-[9px]">%</span></span>
        <span className="w-[60px] pt-px">CPU: 100 <span className="text-[9px]">%</span></span>
        <svg className="ml-0 block h-[16px] w-[16px]" viewBox="0 0 16 16">
          <circle cx="8" cy="8" r="7.500" fill="#1c3a9a" />
          <path d="M3 8h9M8.500 4.500 12 8l-3.500 3.500" fill="none" stroke="#7c9cff" strokeWidth="1.300" />
        </svg>
        <svg className="ml-[8px] block h-[16px] w-[15px]" viewBox="0 0 16 16">
          <circle cx="8" cy="8" r="7.800" fill="#4a2210" />
          <path d="M3.500 11c1.500-1.500 1-6.500 4.500-6.500s3 5 4.500 6.500Z" fill="#ff7a1a" />
        </svg>
      </div>
    </div>
  );
}

/* ---------- taskbar ---------- */
function Taskbar() {
  return (
    <div className="absolute top-[1054px] left-0 flex h-[26px] w-[1916px] items-start overflow-hidden bg-[#1c232c] text-[12.500px] leading-[18px] tracking-[-0.2px] whitespace-nowrap text-white">
      <svg className="mt-[11px] ml-[16px] block h-[17px] w-[16px] shrink-0" viewBox="0 0 16 17">
        <path d="m0 2.500 6.800-1V8H0ZM7.800 1.300 16 0v8H7.800ZM0 9h6.800v6.500L0 14.500ZM7.800 9H16v8l-8.200-1.200Z" fill="#fff" />
      </svg>
      <svg className="mt-[11px] ml-[32px] block h-[18px] w-[17px] shrink-0" viewBox="0 0 17 18">
        <circle cx="9.500" cy="6.500" r="5.300" fill="none" stroke="#fff" strokeWidth="1.400" />
        <path d="M5.800 10.500.8 16.500" stroke="#fff" strokeWidth="1.500" />
      </svg>
      <svg className="mt-[12px] ml-[29.500px] block h-[18px] w-[17px] shrink-0" viewBox="0 0 17 18">
        <path d="M.8 0v2.800h10V0M.8 18v-3.500h10V18M.8 5.500h10v6.500H.8ZM15 0v18" fill="none" stroke="#fff" strokeWidth="1.200" />
        <rect x="13.500" y="4" width="3.200" height="3.200" fill="#fff" />
      </svg>
      <svg className="mt-[9px] ml-[33px] block h-[21px] w-[21px] shrink-0" viewBox="0 0 21 21">
        <path d="M.5 9C1.500 3.500 5.500 0 10.800 0 17 0 20.500 4.500 20.500 10v2.500H7.200c.3 4.500 6.500 5.500 11.500 2.500v4.500C11 23 2.200 20.500 2.200 12.500 2.200 9 4.500 6.500 8 5 5 5.200 2.200 6.700.5 9Zm6.800-.5h7.200C14.500 6.500 13 5 11 5S7.600 6.600 7.300 8.500Z" fill="#1583de" />
      </svg>
      <svg className="mt-[11px] ml-[27px] block h-[17px] w-[22px] shrink-0" viewBox="0 0 22 17">
        <path d="M0 0h9l2 2h11v15H0Z" fill="#e5a51d" />
        <path d="M0 3h22v14H0Z" fill="#fcd364" />
        <path d="M4 17v-5.500a1.500 1.500 0 0 1 1.500-1.500h11a1.500 1.500 0 0 1 1.500 1.500V17h-4v-3H8v3Z" fill="#3e9bdc" />
      </svg>
      <svg className="mt-[8px] ml-[26px] block h-[20px] w-[23px] shrink-0" viewBox="0 0 23 20">
        <path d="M7.500 6V3.500a4 4 0 0 1 8 0V6" fill="none" stroke="#c8c8c8" strokeWidth="1.500" />
        <path d="M0 5.500h23V20H0Z" fill="#fff" />
        <path d="M6 9h5v5H6Z" fill="#f04e1f" />
        <path d="M12 9h5v5h-5Z" fill="#80ba02" />
        <path d="M6 15h5v5H6Z" fill="#02a4ef" />
        <path d="M12 15h5v5h-5Z" fill="#ffb902" />
      </svg>
      <svg className="mt-[10px] ml-[25px] block h-[18px] w-[25px] shrink-0" viewBox="0 0 25 18">
        <path d="M0 5.500 12.500 0 25 5.500V18H0Z" fill="#fff" />
        <path d="M2 6h21l-8.500 7 4 5h-4L12 14.500 0 7Z" fill="#1c232c" />
        <path d="M0 6.500 12.500 14 10 18H0Z" fill="#fff" />
      </svg>
      <svg className="mt-[8px] ml-[23px] block h-[20px] w-[23px] shrink-0" viewBox="0 0 23 20">
        <path d="M0 0h21l2 2v18H0Z" fill="#1c3fcf" />
        <path d="M6 0h12v8.500H6Z" fill="#c9cdd6" />
        <path d="M13 1h3v6h-3Z" fill="#1c3fcf" />
        <path d="M3 11.500h17V20H3Z" fill="#fff" />
        <path d="M3 13h17M3 16h17" stroke="#e88c8c" />
      </svg>
      <span className="mt-[11px] ml-[4.500px] w-[135.500px] shrink-0 tracking-[-0.58px]">Total Commander (...</span>
      <svg className="mt-[9px] block h-[22px] w-[22px] shrink-0" viewBox="0 0 22 22">
        <circle cx="11" cy="11" r="11" fill="#fbc116" />
        <path d="M1.500 5.500A11 11 0 0 1 20.500 5.500H11L6 12.500Z" fill="#e33b2e" />
        <path d="M1.500 5.500A11 11 0 0 0 9 21.800L13 16 6 12.500Z" fill="#2da94f" />
        <circle cx="11" cy="11" r="5.200" fill="#fff" />
        <circle cx="11" cy="11" r="4.200" fill="#4a8af4" />
      </svg>
      <div className="ml-[14px] flex h-full w-[48px] shrink-0 justify-center bg-[#343a44]">
        <svg className="mt-[9px] block h-[22px] w-[22px]" viewBox="0 0 22 22">
          <circle cx="11" cy="11" r="10.200" fill="#120a0c" stroke="#e0242b" strokeWidth="1.300" />
          <circle cx="9.500" cy="11.500" r="3" fill="none" stroke="#e0242b" strokeWidth="1.600" />
          <circle cx="9.500" cy="11.500" r="4.500" fill="none" stroke="#e0242b" strokeWidth="1.500" strokeDasharray="1.800 1.734" />
          <path d="M15 15V9h-2l3-4 3 4h-2v6Z" fill="#e0242b" />
        </svg>
      </div>
      <HwLogo className="mt-[9px] ml-[12px] block h-[21px] w-[21px] shrink-0" />
      <span className="mt-[11px] ml-[5.500px] w-[123px] shrink-0 tracking-[-0.62px]">HWiNFO64 v6.11-3...</span>
      <div className="flex h-full w-[159px] shrink-0 bg-[#4a5059]">
        <Gears className="mt-[8px] ml-[10px] block h-[24px] w-[24px]" />
        <span className="mt-[11px] ml-[3.500px] tracking-[-0.43px]">Testing (4/10) - Lin...</span>
      </div>
      <div className="flex-1" />
      <svg className="mt-[11px] block h-[17px] w-[17px] shrink-0" viewBox="0 0 17 17">
        <circle cx="8.500" cy="8.500" r="7.800" fill="#c9302c" stroke="#b8b8b8" strokeWidth="1.400" />
        <path d="M3 11.500 12 3.500M5.500 14.500 14.500 7" stroke="#f3dada" strokeWidth="2" />
      </svg>
      <svg className="mt-[13px] ml-[9px] block h-[14px] w-[14px] shrink-0" viewBox="0 0 14 14">
        <rect width="14" height="14" fill="#3d6b00" />
        <path d="M1.500 6.500C4 3 9 2.500 12.500 6.500 9 11 4 11 1.500 6.500Z" fill="none" stroke="#9bd81e" strokeWidth="1.300" />
        <circle cx="7" cy="6.800" r="1.800" fill="#9bd81e" />
      </svg>
      <svg className="mt-[12px] ml-[9px] block h-[16px] w-[17px] shrink-0" viewBox="0 0 17 16">
        <path d="M8 0c2 1.500 4 2 6.500 2v5c0 4-3 6.500-6.500 8C4.500 13.500 1.500 11 1.500 7V2C4 2 6 1.500 8 0Z" fill="#fff" />
        <path d="M8 1v13M2 7.500h12" stroke="#1c232c" strokeWidth="1.200" />
        <circle cx="12" cy="11" r="4.500" fill="#1e9e50" />
        <path d="m9.800 11 1.600 1.600 2.800-3" fill="none" stroke="#fff" strokeWidth="1.200" />
      </svg>
      <svg className="mt-[12px] ml-[6.500px] block h-[15px] w-[17px] shrink-0" viewBox="0 0 17 15">
        <path d="M.7 5.500h2.500L6.800 2v11L3.200 9.500H.7ZM9 5.500c.9 1 .9 3 0 4M11.200 3.800c1.800 2 1.800 5.400 0 7.400M13.500 2c2.700 3 2.700 8 0 11" fill="none" stroke="#fff" strokeWidth="1.100" />
      </svg>
      <svg className="mt-[12px] ml-[7px] block h-[15px] w-[18px] shrink-0" viewBox="0 0 18 15">
        <path d="M6 2.500h11v8H5.500M11 10.500v3M8 14h6.500M.7 1.500h4.500V5H.7ZM3 5v9" fill="none" stroke="#fff" strokeWidth="1.200" />
      </svg>
      <HwLogo className="mt-[12px] ml-[7.500px] block h-[15px] w-[15px] shrink-0" />
      <span className="mt-[11px] ml-[10px] w-[31px] tracking-[-0.6px]">ENG</span>
      <div className="mt-[1.500px] flex w-[64px] flex-col items-center text-[12px] tracking-[-0.5px]">
        <span>14:12</span>
        <span>21.09.2019</span>
      </div>
      <svg className="mt-[12px] ml-[13.500px] block h-[16px] w-[16px] shrink-0" viewBox="0 0 16 16">
        <path d="M0 0h16v13h-4l-2 3v-3H0Z" fill="#fff" />
        <path d="M2.500 3.500h11M2.500 6.500h11M2.500 9.500h7" stroke="#1c232c" strokeWidth="1.200" />
      </svg>
      <div className="mr-[4px] ml-[20px] h-full w-px shrink-0 bg-[#7d8288]" />
    </div>
  );
}

export default function App() {
  return (
    <div className="relative h-[1080px] w-[1920px] overflow-hidden bg-white font-['Noto_Sans','Open_Sans',sans-serif]">
      <Wallpaper />
      <div className="absolute top-[7px] left-0 h-px w-[1916px] bg-[#26384c]" />
      <div className="absolute top-[376px] left-[3px] text-[12px] leading-[16px] text-white">c</div>
      <div className="absolute top-[460px] left-[2px] text-[12px] leading-[16px] text-white">N</div>
      <Meter />
      <SensorWindow />
      <LinxWindow />
      <Taskbar />
      <div className="absolute top-[1034px] left-[533px] flex h-[20px] w-[87px] items-center border border-[#767676] bg-white pl-[5px] text-[12px] tracking-[-0.2px] whitespace-nowrap text-[#575757] shadow-[3px_3px_2px_rgba(0,0,0,0.45)]">
        Driver Booster
      </div>
    </div>
  );
}
